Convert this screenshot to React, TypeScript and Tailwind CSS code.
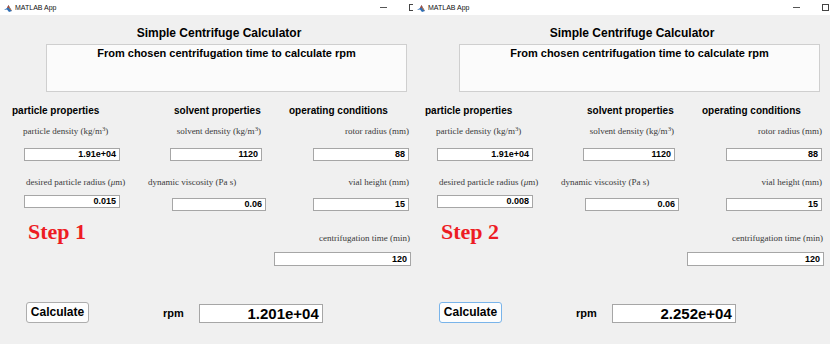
import React from "react";

const sans = "font-['Liberation_Sans',Arial,sans-serif]";
const serif = "font-['Liberation_Serif','Times_New_Roman',serif]";

const MatlabIcon = () => (
  <svg width="8" height="8" viewBox="0 0 8 8" className="shrink-0">
    <path d="M0 6 L3 4 L4.5 1 L8 7 L5 8 L3 5.5 Z" fill="#2f6fb5" />
    <path d="M4.5 1 L6 4 L8 7 L5.5 5 Z" fill="#e8741f" />
    <path d="M3 4 L4.5 1 L5 3.5 Z" fill="#c8401b" />
  </svg>
);

const Field = ({ value, className }: { value: string; className: string }) => (
  <div
    className={`flex items-center justify-end bg-white border border-[#a6a6a6] pr-[3px] text-[9px] font-bold text-black leading-none ${className}`}
  >
    {value}
  </div>
);

const Label = ({ children, className }: { children: React.ReactNode; className: string }) => (
  <div className={`${serif} text-[9px] leading-[12px] h-[12px] text-[#3a3a3a] whitespace-nowrap ${className}`}>
    {children}
  </div>
);

interface WindowProps {
  step: string;
  radius: string;
  rpm: string;
  focused?: boolean;
  className: string;
}

const AppWindow: React.FC<WindowProps> = ({ step, radius, rpm, focused, className }) => {
  return (
    <div className={`overflow-hidden h-full bg-[#f0f0f0] ${className}`}>
      <div className="w-[450px]">
        {/* Title bar */}
        <div className="flex items-center h-[15px] bg-white">
          <div className="ml-[4px]">
            <MatlabIcon />
          </div>
          <span className="ml-[3px] text-[7px] text-[#111] leading-none">MATLAB App</span>
          <div className="ml-auto flex items-center pr-[34px]">
            <div className="w-[7px] h-px bg-[#555]" />
            <div className="ml-[22px] w-[7px] h-[7px] border border-[#444]" />
          </div>
        </div>

        {/* Heading */}
        <div className="mt-[10px] w-[438px] text-center text-[12px] font-bold leading-[16px] text-black">
          Simple Centrifuge Calculator
        </div>
        <div className="mt-[3px] ml-[46px] w-[361px] h-[48px] bg-[#fbfbfb] border border-[#cfcfcf] text-center text-[11px] font-bold leading-[16px] text-black">
          From chosen centrifugation time to calculate rpm
        </div>

        {/* Three columns */}
        <div className="flex mt-[11px]">
          {/* particle properties */}
          <div className="w-[122px] pl-[12px] flex flex-col items-start">
            <div className="h-[14px] leading-[16px] text-[10px] font-bold text-black whitespace-nowrap">
              particle properties
            </div>
            <Label className="mt-[8px] ml-[11px]">
              particle density (kg/m<sup>3</sup>)
            </Label>
            <Field value="1.91e+04" className="mt-[11px] ml-[12px] w-[96px] h-[13px]" />
            <Label className="mt-[15px] ml-[14px]">
              desired particle radius (<i>μ</i>m)
            </Label>
            <Field value={radius} className="mt-[7px] ml-[12px] w-[96px] h-[13px]" />
            <div className={`${serif} mt-[11px] ml-[16px] text-[22px] leading-[26px] font-bold text-[#ed1c24]`}>
              {step}
            </div>
          </div>

          {/* solvent properties */}
          <div className="w-[145px] flex flex-col items-start">
            <div className="ml-[52px] h-[14px] leading-[16px] text-[10px] font-bold text-black whitespace-nowrap">
              solvent properties
            </div>
            <Label className="mt-[8px] w-[139px] text-right">
              solvent density (kg/m<sup>3</sup>)
            </Label>
            <Field value="1120" className="mt-[11px] ml-[48px] w-[92px] h-[13px]" />
            <Label className="mt-[15px] ml-[26px]">dynamic viscosity (Pa s)</Label>
            <Field value="0.06" className="mt-[10px] ml-[50px] w-[94px] h-[13px]" />
          </div>

          {/* operating conditions */}
          <div className="w-[144px] flex flex-col items-start">
            <div className="ml-[22px] h-[14px] leading-[16px] text-[10px] font-bold text-black whitespace-nowrap">
              operating conditions
            </div>
            <Label className="mt-[8px] w-[142px] text-right">rotor radius (mm)</Label>
            <Field value="88" className="mt-[11px] ml-[46px] w-[96px] h-[13px]" />
            <Label className="mt-[15px] w-[142px] text-right">vial height (mm)</Label>
            <Field value="15" className="mt-[10px] ml-[46px] w-[96px] h-[13px]" />
            <Label className="mt-[21px] w-[143px] text-right">centrifugation time (min)</Label>
            <Field value="120" className="mt-[8px] ml-[7px] w-[137px] h-[14px]" />
          </div>
        </div>

        {/* Calculate row */}
        <div className="flex items-center mt-[35px] h-[22px]">
          <div
            className={`ml-[26px] w-[63px] h-[21px] flex items-center justify-center rounded-[3px] bg-[#fdfdfd] border text-[12px] font-bold text-black ${
              focused ? "border-[#79b4ea]" : "border-[#adadad]"
            }`}
          >
            Calculate
          </div>
          <span className="ml-[74px] mt-[2px] text-[11px] font-bold text-black leading-none">rpm</span>
          <div className="ml-[15px] w-[124px] h-[19px] mt-[3px] flex items-center justify-end pr-[3px] bg-white border border-[#a6a6a6] text-[15px] font-bold text-black leading-none">
            {rpm}
          </div>
        </div>
      </div>
    </div>
  );
};

export default function App() {
  return (
    <div className={`${sans} flex w-[830px] h-[344px] bg-[#f0f0f0] overflow-hidden`}>
      <AppWindow className="w-[413px] shrink-0" step="Step 1" radius="0.015" rpm="1.201e+04" />
      <AppWindow className="flex-1" step="Step 2" radius="0.008" rpm="2.252e+04" focused />
    </div>
  );
}
